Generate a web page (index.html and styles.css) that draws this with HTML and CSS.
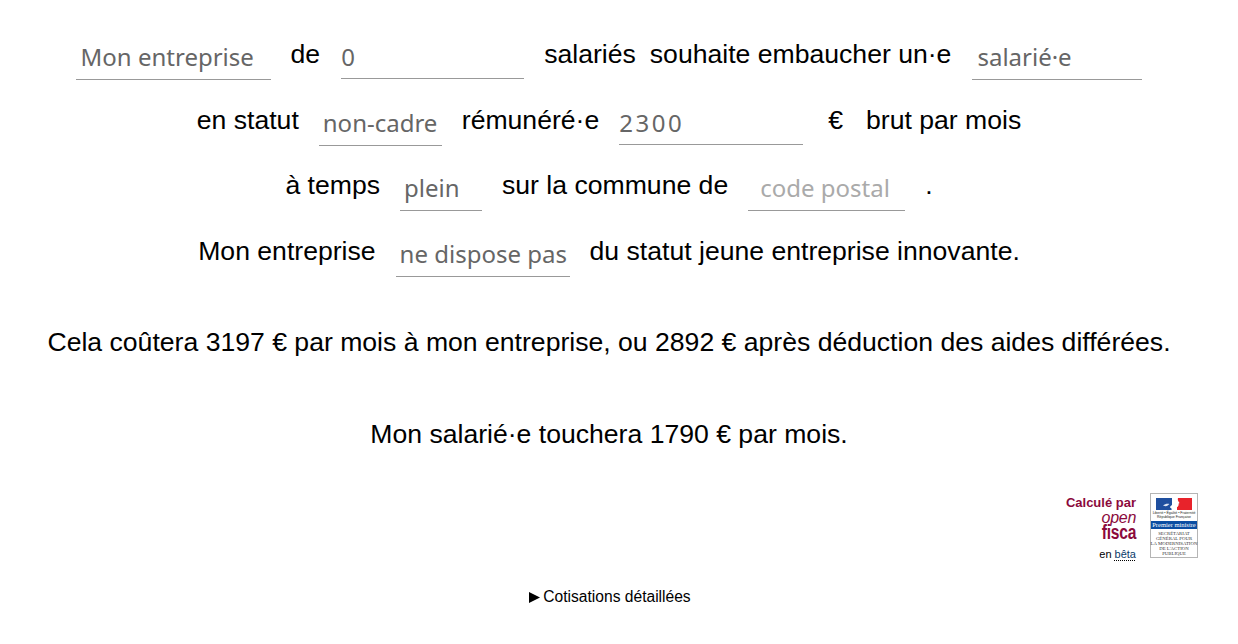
FILE: index.html
```html
<!DOCTYPE html>
<html lang="fr">
<head>
<meta charset="utf-8">
<title>Embauche</title>
<link rel="stylesheet" href="styles.css">
</head>
<body>
<main class="page">
  <form class="form">
    <div class="row row-first">
      <span class="field w-195 select">Mon entreprise</span>
      <span class="label">de</span>
      <span class="field w-183 up-1 num nudge">0</span>
      <span class="label">salariés</span>
      <span class="label tight">souhaite embaucher un·e</span>
      <span class="field w-170 select nudge">salarié·e</span>
    </div>
    <div class="row">
      <span class="label">en statut</span>
      <span class="field w-123 select tight-pad">non-cadre</span>
      <span class="label">rémunéré·e</span>
      <span class="field w-184 up-1 num spaced">2300</span>
      <span class="label euro">€</span>
      <span class="label brut">brut par mois</span>
    </div>
    <div class="row">
      <span class="label">à temps</span>
      <span class="field w-82 select tight-pad">plein</span>
      <span class="label">sur la commune de</span>
      <span class="field w-157 placeholder">code postal</span>
      <span class="label">.</span>
    </div>
    <div class="row">
      <span class="label">Mon entreprise</span>
      <span class="field w-174 select tight-pad">ne dispose pas</span>
      <span class="label">du statut jeune entreprise innovante.</span>
    </div>
  </form>
  <p class="result result-first">Cela coûtera 3197 € par mois à mon entreprise, ou 2892 € après déduction des aides différées.</p>
  <p class="result result-second">Mon salarié·e touchera 1790 € par mois.</p>
  <div class="credits">
    <div class="credit-text">
      <span class="calc">Calculé par</span>
      <span class="brand"><span class="brand-open">open</span><span class="brand-fisca">fisca</span></span>
      <span class="beta">en <abbr class="beta-abbr" title="version bêta">bêta</abbr></span>
    </div>
    <div class="sgmap">
      <svg class="flag" viewBox="0 0 36 12" width="36" height="12" aria-hidden="true">
        <rect width="36" height="12" fill="#fff"/>
        <rect width="16" height="12" fill="#1f4f9f"/>
        <rect x="21" width="15" height="12" fill="#e8232b"/>
        <path d="M16 0h6c-.5 1.500 0 2.500.5 3.500l1 1.500-1 .7.200 1.300-.6 1c-.2 1.200-1.600 1-2.600 1.300-1 .7-1 1.500-1 2.700h-3c.5-1.200-.2-1.800-1.300-2.200-.3-1 .2-1.500 1.200-2.200.8-.8 1-2 .9-3.200z" fill="#fff"/>
        <path d="M7 7.500c2-1.500 4-2 6.500-1.500-1.500.8-2 2.200-4 2.200z" fill="#dfe6f3"/>
      </svg>
      <span class="rf">Liberté • Égalité • Fraternité</span>
      <span class="rf rf-strong">République Française</span>
      <span class="band">Premier ministre</span>
      <span class="sg">SECRÉTARIAT<br>GÉNÉRAL POUR<br>LA MODERNISATION<br>DE L'ACTION<br>PUBLIQUE</span>
    </div>
  </div>
  <details class="details">
    <summary><svg class="marker" viewBox="0 0 11 11" width="11" height="11" aria-hidden="true"><path d="M0 0l11 5.500L0 11z"/></svg>Cotisations détaillées</summary>
  </details>
</main>
</body>
</html>
```

FILE: styles.css
```css
* { box-sizing: border-box; }
html, body { margin: 0; padding: 0; background: #fff; }
body { font-family: "Liberation Sans", Arial, sans-serif; color: #000; }
.page { width: 1218px; height: 644px; overflow: hidden; }
.form { padding-top: 24px; display: flex; flex-direction: column; gap: 10px; }
.row { display: flex; justify-content: center; align-items: flex-start; height: 55.500px; gap: 20px; font-size: 26.600px; }
.label { line-height: 30px; padding-top: 15px; white-space: pre; }
.tight { margin-left: -6px; }
.euro { margin-left: 5px; }
.brut { margin-left: 3px; }
.nudge { margin-left: 1px; }
.field {
  display: block; height: 56px; padding: 15px 0 0 5px;
  font-family: "Noto Sans", sans-serif; font-size: 24px; line-height: 36px;
  color: #666; border-bottom: 1px solid #999; white-space: nowrap;
}
.up-1 { height: 55px; }
.num { padding-left: 0; }
.tight-pad { padding-left: 4px; }
.spaced { letter-spacing: 2.500px; }
.placeholder { color: #aaa; }
.w-195 { width: 195px; }
.w-183 { width: 183px; }
.w-170 { width: 170px; }
.w-123 { width: 123px; }
.w-184 { width: 184px; }
.w-82 { width: 82px; }
.w-157 { width: 157px; padding-left: 12px; }
.w-174 { width: 174px; }
.result { margin: 0; text-align: center; font-size: 26.600px; line-height: 30px; }
.result-first { margin-top: 51px; }
.result-second { margin-top: 62px; }
.credits { display: flex; justify-content: flex-end; gap: 14px; padding-right: 20px; margin-top: 44px; }
.credit-text { display: flex; flex-direction: column; align-items: flex-end; width: 80px; padding-top: 3px; }
.calc { font-size: 13px; font-weight: bold; color: #8b0a3c; line-height: 14px; white-space: nowrap; }
.brand { display: flex; flex-direction: column; align-items: flex-end; color: #8b0a3c; margin-top: 1px; }
.brand-open { font-size: 16px; line-height: 14px; font-style: italic; letter-spacing: -0.3px; }
.brand-fisca { font-weight: bold; font-size: 20px; line-height: 14px; letter-spacing: -0.3px; transform: scaleX(0.78); transform-origin: right center; }
.beta { font-size: 11px; line-height: 14px; margin-top: 8px; }
.beta-abbr { color: #0a3a6a; text-decoration: underline dotted #000; text-decoration-thickness: 1px; text-underline-offset: 2px; }
.sgmap { width: 48px; height: 65px; border: 1px solid #b5b5b5; display: flex; flex-direction: column; align-items: center; padding-top: 4px; background: #fff; }
.flag { display: block; flex: none; }
.rf { font-size: 3.500px; line-height: 4px; white-space: nowrap; color: #222; margin-top: 1px; }
.rf + .rf { margin-top: 0; }
.band { align-self: stretch; margin-top: 2px; background: #0b4ea2; color: #fff; font-family: "Liberation Serif", serif; font-size: 6.500px; line-height: 8px; text-align: center; white-space: nowrap; }
.sg { margin-top: 2px; font-family: "Liberation Serif", serif; font-size: 4.800px; line-height: 5px; text-align: center; color: #333; white-space: nowrap; }
.details { margin-top: 27px; text-align: center; font-size: 15.600px; line-height: 18px; }
.details summary { cursor: pointer; list-style: none; padding-left: 2px; }
.marker { margin-right: 3px; vertical-align: -1px; }
```
